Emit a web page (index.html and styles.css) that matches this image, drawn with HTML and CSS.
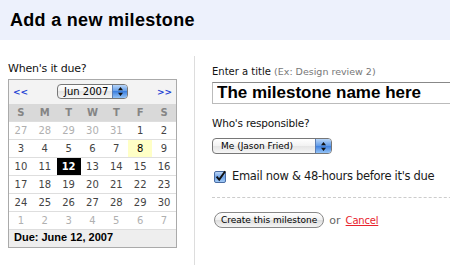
FILE: index.html
```html
<!DOCTYPE html>
<html lang="en">
<head>
  <meta charset="UTF-8">
  <meta name="viewport" content="width=device-width, initial-scale=1.0">
  <title>Add a new milestone</title>
  <link rel="stylesheet" href="styles.css">
</head>
<body>
  <div class="header">
    <h1>Add a new milestone</h1>
  </div>

  <div class="page">
    <div class="due-col">
      <div class="label label-due">When's it due?</div>
      <div class="calendar">
        <div class="cal-nav">
          <a class="nav-link" href="#">&lt;&lt;</a>
          <span class="popup popup-month">
            <span class="popup-text">Jun 2007</span>
            <span class="stepper">
              <svg width="5" height="9" viewBox="0 0 5 9"><path d="M2.5 0 L5 3.2 H0Z M0 5.8 H5 L2.5 9Z" fill="#111"/></svg>
            </span>
          </span>
          <a class="nav-link" href="#">&gt;&gt;</a>
        </div>
        <table class="cal-days">
          <thead>
            <tr><th>S</th><th>M</th><th>T</th><th>W</th><th>T</th><th>F</th><th>S</th></tr>
          </thead>
          <tbody>
            <tr><td class="other">27</td><td class="other">28</td><td class="other">29</td><td class="other">30</td><td class="other">31</td><td>1</td><td>2</td></tr>
            <tr><td>3</td><td>4</td><td>5</td><td>6</td><td>7</td><td class="today">8</td><td>9</td></tr>
            <tr><td>10</td><td>11</td><td class="selected">12</td><td>13</td><td>14</td><td>15</td><td>16</td></tr>
            <tr><td>17</td><td>18</td><td>19</td><td>20</td><td>21</td><td>22</td><td>23</td></tr>
            <tr><td>24</td><td>25</td><td>26</td><td>27</td><td>28</td><td>29</td><td>30</td></tr>
            <tr><td class="other">1</td><td class="other">2</td><td class="other">3</td><td class="other">4</td><td class="other">5</td><td class="other">6</td><td class="other">7</td></tr>
          </tbody>
        </table>
        <div class="cal-due">Due: June 12, 2007</div>
      </div>
    </div>

    <div class="form-col">
      <div class="label label-title">Enter a title <span class="hint">(Ex: Design review 2)</span></div>
      <input class="title-input" type="text" value="The milestone name here">

      <div class="label label-who">Who's responsible?</div>
      <span class="popup popup-person">
        <span class="popup-text">Me (Jason Fried)</span>
        <span class="stepper">
          <svg width="5" height="9" viewBox="0 0 5 9"><path d="M2.5 0 L5 3.2 H0Z M0 5.8 H5 L2.5 9Z" fill="#111"/></svg>
        </span>
      </span>

      <label class="check-row">
        <span class="checkbox">
          <svg width="13" height="13" viewBox="0 0 13 13">
            <defs>
              <linearGradient id="cbFill" x1="0" y1="0" x2="0" y2="1">
                <stop offset="0" stop-color="#c6dcf8"/>
                <stop offset="0.5" stop-color="#6fa3e8"/>
                <stop offset="1" stop-color="#a5ccf6"/>
              </linearGradient>
            </defs>
            <rect x="0.5" y="1.5" width="11" height="11" rx="1.5" fill="url(#cbFill)" stroke="#4a6ca3"/>
            <path d="M2.6 6.6 L5.2 9.6 L11.2 1.2" fill="none" stroke="#111" stroke-width="1.9"/>
          </svg>
        </span>
        Email now &amp; 48-hours before it's due
      </label>

      <div class="divider"></div>

      <div class="actions">
        <button class="btn">Create this milestone</button>
        <span class="or">or</span>
        <a class="cancel" href="#">Cancel</a>
      </div>
    </div>
  </div>
</body>
</html>
```

FILE: styles.css
```css
body {
  margin: 0;
  font-family: "DejaVu Sans", Verdana, sans-serif;
  color: #1a1a1a;
  background: #fff;
  overflow: hidden;
}
.header {
  height: 40px;
  box-sizing: border-box;
  padding: 10px 0 0 10px;
  background: #edf1fc;
}
h1 {
  margin: 0;
  font: bold 18px/20px "Liberation Sans", Arial, sans-serif;
  letter-spacing: 0.3px;
  color: #000;
}
.page {
  display: flex;
}
.due-col {
  flex: none;
  width: 168px;
  padding: 22px 0 0 8px;
}
.label {
  font-size: 10.5px;
  line-height: 14px;
  letter-spacing: -0.2px;
  color: #111;
}
.label-due {
  font-size: 11px;
}

/* calendar */
.calendar {
  margin-top: 3px;
  width: 169px;
  box-sizing: border-box;
  border: 1px solid #aaa;
}
.cal-nav {
  height: 24px;
  display: flex;
  align-items: center;
  justify-content: space-between;
  padding: 0 4px;
  background: #f3f3f3;
}
.nav-link {
  color: #2141d4;
  font-size: 9px;
  font-weight: bold;
  text-decoration: none;
}
.popup {
  display: inline-flex;
  align-items: center;
  height: 15px;
  box-sizing: border-box;
  border: 1px solid #777;
  border-radius: 4px;
  background: linear-gradient(#fff, #f2f2f2 50%, #e4e4e4 50%, #f6f6f6);
  font-size: 10px;
  color: #000;
  overflow: hidden;
}
.popup-month {
  width: 71px;
  margin-top: -2px;
}
.popup-text {
  flex: 1;
  padding-left: 6px;
  white-space: nowrap;
}
.stepper {
  width: 14px;
  height: 100%;
  display: flex;
  align-items: center;
  justify-content: center;
  border-left: 1px solid #5b7db3;
  background: linear-gradient(#b9d6f8, #5f9ae8 50%, #3d80e0 50%, #94c3f6);
}
.cal-days {
  width: 100%;
  border-collapse: separate;
  border-spacing: 0;
  table-layout: fixed;
  font-size: 10px;
}
.cal-days th {
  height: 17px;
  padding: 0;
  background: #d9d9d9;
  color: #858585;
  font-weight: bold;
}
.cal-days td {
  height: 17px;
  padding: 0;
  border-top: 1px solid #dedede;
  text-align: center;
  color: #444;
}
.cal-days td.other {
  color: #b0b0b0;
}
.cal-days td.today {
  background: #ffffc6;
  color: #000;
}
.cal-days td.selected {
  background: #000;
  color: #fff;
  font-weight: bold;
}
.cal-due {
  height: 17px;
  border-top: 1px solid #dedede;
  background: #eee;
  padding-left: 5px;
  font: bold 11px/14px "Liberation Sans", Arial, sans-serif;
  color: #000;
}

/* form */
.form-col {
  flex: 1;
  min-height: 200px;
  margin: 16px 0 0 18px;
  padding: 9px 0 0 17px;
  border-left: 1px solid #ddd;
}
.label-title {
  font-size: 10px;
  letter-spacing: 0;
}
.hint {
  font-size: 9.5px;
  color: #777;
}
.title-input {
  display: block;
  width: 260px;
  height: 22px;
  box-sizing: border-box;
  margin: 3px 0 0;
  padding: 0 4px;
  border: 1px solid #bbb;
  border-top-color: #888;
  font: bold 17px "Liberation Sans", Arial, sans-serif;
  color: #000;
  outline: none;
}
.label-who {
  margin-top: 12px;
}
.popup-person {
  display: flex;
  width: 120px;
  height: 16px;
  margin-top: 8px;
  font-size: 9px;
}
.popup-person .popup-text {
  padding-left: 8px;
}
.popup-person .stepper {
  width: 15px;
}
.check-row {
  display: flex;
  align-items: center;
  margin-top: 14px;
  font-size: 11.5px;
  line-height: 16px;
  letter-spacing: -0.3px;
}
.checkbox {
  display: flex;
  margin: 0 5px 0 2px;
}
.divider {
  margin-top: 13px;
  border-top: 1px dashed #ccc;
}
.actions {
  display: flex;
  align-items: center;
  margin-top: 14px;
}
.btn {
  height: 16px;
  margin: 0 0 0 2px;
  padding: 0 6px;
  border: 1px solid #888;
  border-radius: 8px;
  background: linear-gradient(#fff, #f0f0f0 50%, #dcdcdc 50%, #f5f5f5);
  font: 9px "DejaVu Sans", Verdana, sans-serif;
  color: #000;
}
.or {
  margin-left: 5px;
  font-size: 11px;
  color: #666;
}
.cancel {
  margin-left: 5px;
  font-size: 10px;
  letter-spacing: -0.2px;
  color: #e8232d;
}
```
